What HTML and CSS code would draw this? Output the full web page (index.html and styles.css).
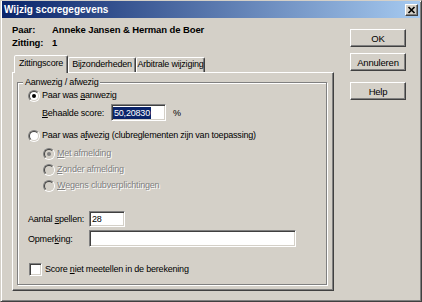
FILE: index.html
```html
<!DOCTYPE html>
<html lang="nl">
<head>
  <meta charset="UTF-8">
  <title>Wijzig scoregegevens</title>
  <link rel="stylesheet" href="styles.css">
</head>
<body>
  <div class="window">
    <!-- Title bar -->
    <div class="titlebar">
      <span class="title">Wijzig scoregegevens</span>
      <span class="close">
        <svg width="13" height="12" viewBox="0 0 13 12">
          <path d="M3.5 3 L9.5 9 M9.5 3 L3.5 9" stroke="#000" stroke-width="1.7" fill="none"/>
        </svg>
      </span>
    </div>

    <div class="body">
      <div class="main">
        <div class="info">
          <div class="info-row"><span class="info-label">Paar:</span><span>Anneke Jansen &amp; Herman de Boer</span></div>
          <div class="info-row"><span class="info-label">Zitting:</span><span>1</span></div>
        </div>

        <div class="tabs">
          <div class="tab active" style="width:54px">Zittingscore</div>
          <div class="tab" style="width:68px">Bijzonderheden</div>
          <div class="tab" style="width:69px">Arbitrale wijziging</div>
        </div>

        <div class="panel">
          <div class="group">
            <span class="group-label">Aanwezig / afwezig</span>

            <div class="row">
              <span class="radio checked"></span>
              <span class="text">Paar was <u>a</u>anwezig</span>
            </div>
            <div class="row score-row">
              <span class="label score-label"><u>B</u>ehaalde score:</span>
              <span class="field score-field"><span class="sel">50,20830</span></span>
              <span class="pct">%</span>
            </div>
            <div class="row absent-row">
              <span class="radio"></span>
              <span class="text">Paar was a<u>f</u>wezig (clubreglementen zijn van toepassing)</span>
            </div>
            <div class="row sub first-sub disabled">
              <span class="radio checked"></span>
              <span class="text"><u>M</u>et afmelding</span>
            </div>
            <div class="row sub disabled">
              <span class="radio"></span>
              <span class="text"><u>Z</u>onder afmelding</span>
            </div>
            <div class="row sub disabled">
              <span class="radio"></span>
              <span class="text"><u>W</u>egens clubverplichtingen</span>
            </div>

            <div class="row count-row">
              <span class="label form-label">Aantal <u>s</u>pellen:</span>
              <span class="field count-field">28</span>
            </div>
            <div class="row remark-row">
              <span class="label form-label">Opmer<u>k</u>ing:</span>
              <span class="field remark-field"></span>
            </div>

            <div class="row check-row">
              <span class="checkbox"></span>
              <span class="text">Score <u>n</u>iet meetellen in de berekening</span>
            </div>
          </div>
        </div>
      </div>

      <div class="side">
        <button class="btn">OK</button>
        <button class="btn">Annuleren</button>
        <button class="btn btn-help">Help</button>
      </div>
    </div>
  </div>
</body>
</html>
```

FILE: styles.css
```css
/* General styles */
* {
  margin: 0;
  padding: 0;
  box-sizing: border-box;
}
body {
  font-family: "Liberation Sans", Arial, sans-serif;
  font-size: 9px;
  letter-spacing: -0.2px;
  color: #000;
  background-color: #d4d0c8;
}
u {
  text-decoration: underline;
  text-underline-offset: 1px;
}

/* Window frame */
.window {
  width: 422px;
  height: 302px;
  background-color: #d4d0c8;
  border: 1px solid;
  border-color: #d4d0c8 #404040 #404040 #d4d0c8;
  box-shadow: inset 1px 1px #fff, inset -1px -1px #808080;
  padding: 0 1px;
}
.titlebar {
  height: 17px;
  display: flex;
  align-items: center;
  padding-left: 2px;
  background: linear-gradient(to right, #0a246a, #a6caf0);
  color: #fff;
  font-weight: bold;
  font-size: 10px;
  letter-spacing: 0;
}
.close {
  margin-left: auto;
  margin-right: 2px;
  width: 13px;
  height: 12px;
  display: flex;
  background-color: #d4d0c8;
  border: 1px solid;
  border-color: #fff #404040 #404040 #fff;
  box-shadow: inset -1px -1px #808080;
}
.close svg {
  margin: -1px;
}

.body {
  display: flex;
  padding: 5px 0 0 10px;
}
.main {
  width: 322px;
}
.side {
  margin-left: 16px;
  width: 56px;
  padding-top: 6px;
  display: flex;
  flex-direction: column;
}

/* Buttons */
.btn {
  height: 18px;
  font-family: inherit;
  font-size: 9.5px;
  letter-spacing: -0.2px;
  color: #000;
  background-color: #d4d0c8;
  border: 1px solid;
  border-color: #fff #404040 #404040 #fff;
  box-shadow: inset -1px -1px #808080;
}
.btn + .btn {
  margin-top: 6px;
}
.btn.btn-help {
  margin-top: 11px;
}

/* Pair info */
.info-row {
  display: flex;
  height: 13px;
  line-height: 13px;
  font-weight: bold;
  font-size: 9.5px;
  letter-spacing: -0.1px;
}
.info-label {
  width: 40px;
}

/* Tabs */
.tabs {
  margin-top: 6px;
  height: 17px;
  display: flex;
  align-items: flex-end;
  padding-left: 2px;
}
.tab {
  height: 15px;
  line-height: 13px;
  text-align: center;
  white-space: nowrap;
  border: 1px solid;
  border-bottom: none;
  border-color: #fff #404040 transparent #fff;
  border-radius: 2px 2px 0 0;
  box-shadow: inset -1px 0 #808080;
}
.tab.active {
  position: relative;
  z-index: 1;
  height: 18px;
  margin-bottom: -1px;
  line-height: 15px;
  background-color: #d4d0c8;
}

.panel {
  height: 219px;
  border: 1px solid;
  border-color: #fff #404040 #404040 #fff;
  box-shadow: inset -1px -1px #808080;
  padding: 9px 0 0 4px;
}

/* Group box */
.group {
  position: relative;
  width: 310px;
  height: 203px;
  border: 1px solid #808080;
  box-shadow: 1px 1px #fff, inset 1px 1px #fff;
  padding: 6px 0 0 10px;
}
.group-label {
  position: absolute;
  top: -7px;
  left: 5px;
  padding: 0 2px;
  line-height: 13px;
  background-color: #d4d0c8;
}

.row {
  display: flex;
  align-items: center;
  height: 13px;
  white-space: nowrap;
}
.row .text {
  margin-left: 2px;
  line-height: 13px;
}
.score-row {
  margin-top: 2px;
  height: 17px;
  padding-left: 14px;
}
.score-label {
  width: 69px;
}
.pct {
  margin-left: 7px;
}
.absent-row {
  margin-top: 8px;
}
.sub {
  margin-top: 3px;
  padding-left: 15px;
}
.sub.first-sub {
  margin-top: 5px;
}
.disabled .text {
  color: #808080;
  text-shadow: 1px 1px #fff;
}
.count-row {
  margin-top: 19px;
  height: 16px;
}
.remark-row {
  margin-top: 3px;
  height: 17px;
}
.form-label {
  width: 61px;
}
.check-row {
  margin-top: 16px;
  padding-left: 1px;
}

/* Sunken fields */
.field {
  height: 100%;
  display: flex;
  align-items: center;
  padding-left: 2px;
  background-color: #fff;
  border: 1px solid;
  border-color: #808080 #fff #fff #808080;
  box-shadow: inset 1px 1px #404040, inset -1px -1px #d4d0c8;
}
.score-field {
  width: 55px;
  padding-left: 1px;
}
.sel {
  background-color: #0a246a;
  color: #fff;
  padding: 0 1px;
  line-height: 12px;
}
.count-field {
  width: 36px;
}
.remark-field {
  width: 207px;
}

/* Radio and checkbox */
.radio {
  position: relative;
  flex: none;
  width: 12px;
  height: 12px;
  border-radius: 50%;
  border: 1px solid;
  border-color: #808080 #fff #fff #808080;
}
.radio::before {
  content: "";
  position: absolute;
  inset: 0;
  border-radius: 50%;
  border: 1px solid;
  border-color: #404040 #d4d0c8 #d4d0c8 #404040;
  background-color: #fff;
}
.radio.checked::after {
  content: "";
  position: absolute;
  left: 3px;
  top: 3px;
  width: 4px;
  height: 4px;
  border-radius: 50%;
  background-color: #000;
}
.disabled .radio::before {
  background-color: #d4d0c8;
}
.disabled .radio.checked::after {
  background-color: #808080;
}
.checkbox {
  flex: none;
  width: 13px;
  height: 13px;
  background-color: #fff;
  border: 1px solid;
  border-color: #808080 #fff #fff #808080;
  box-shadow: inset 1px 1px #404040, inset -1px -1px #d4d0c8;
}
.check-row .text {
  margin-left: 3px;
}
```
